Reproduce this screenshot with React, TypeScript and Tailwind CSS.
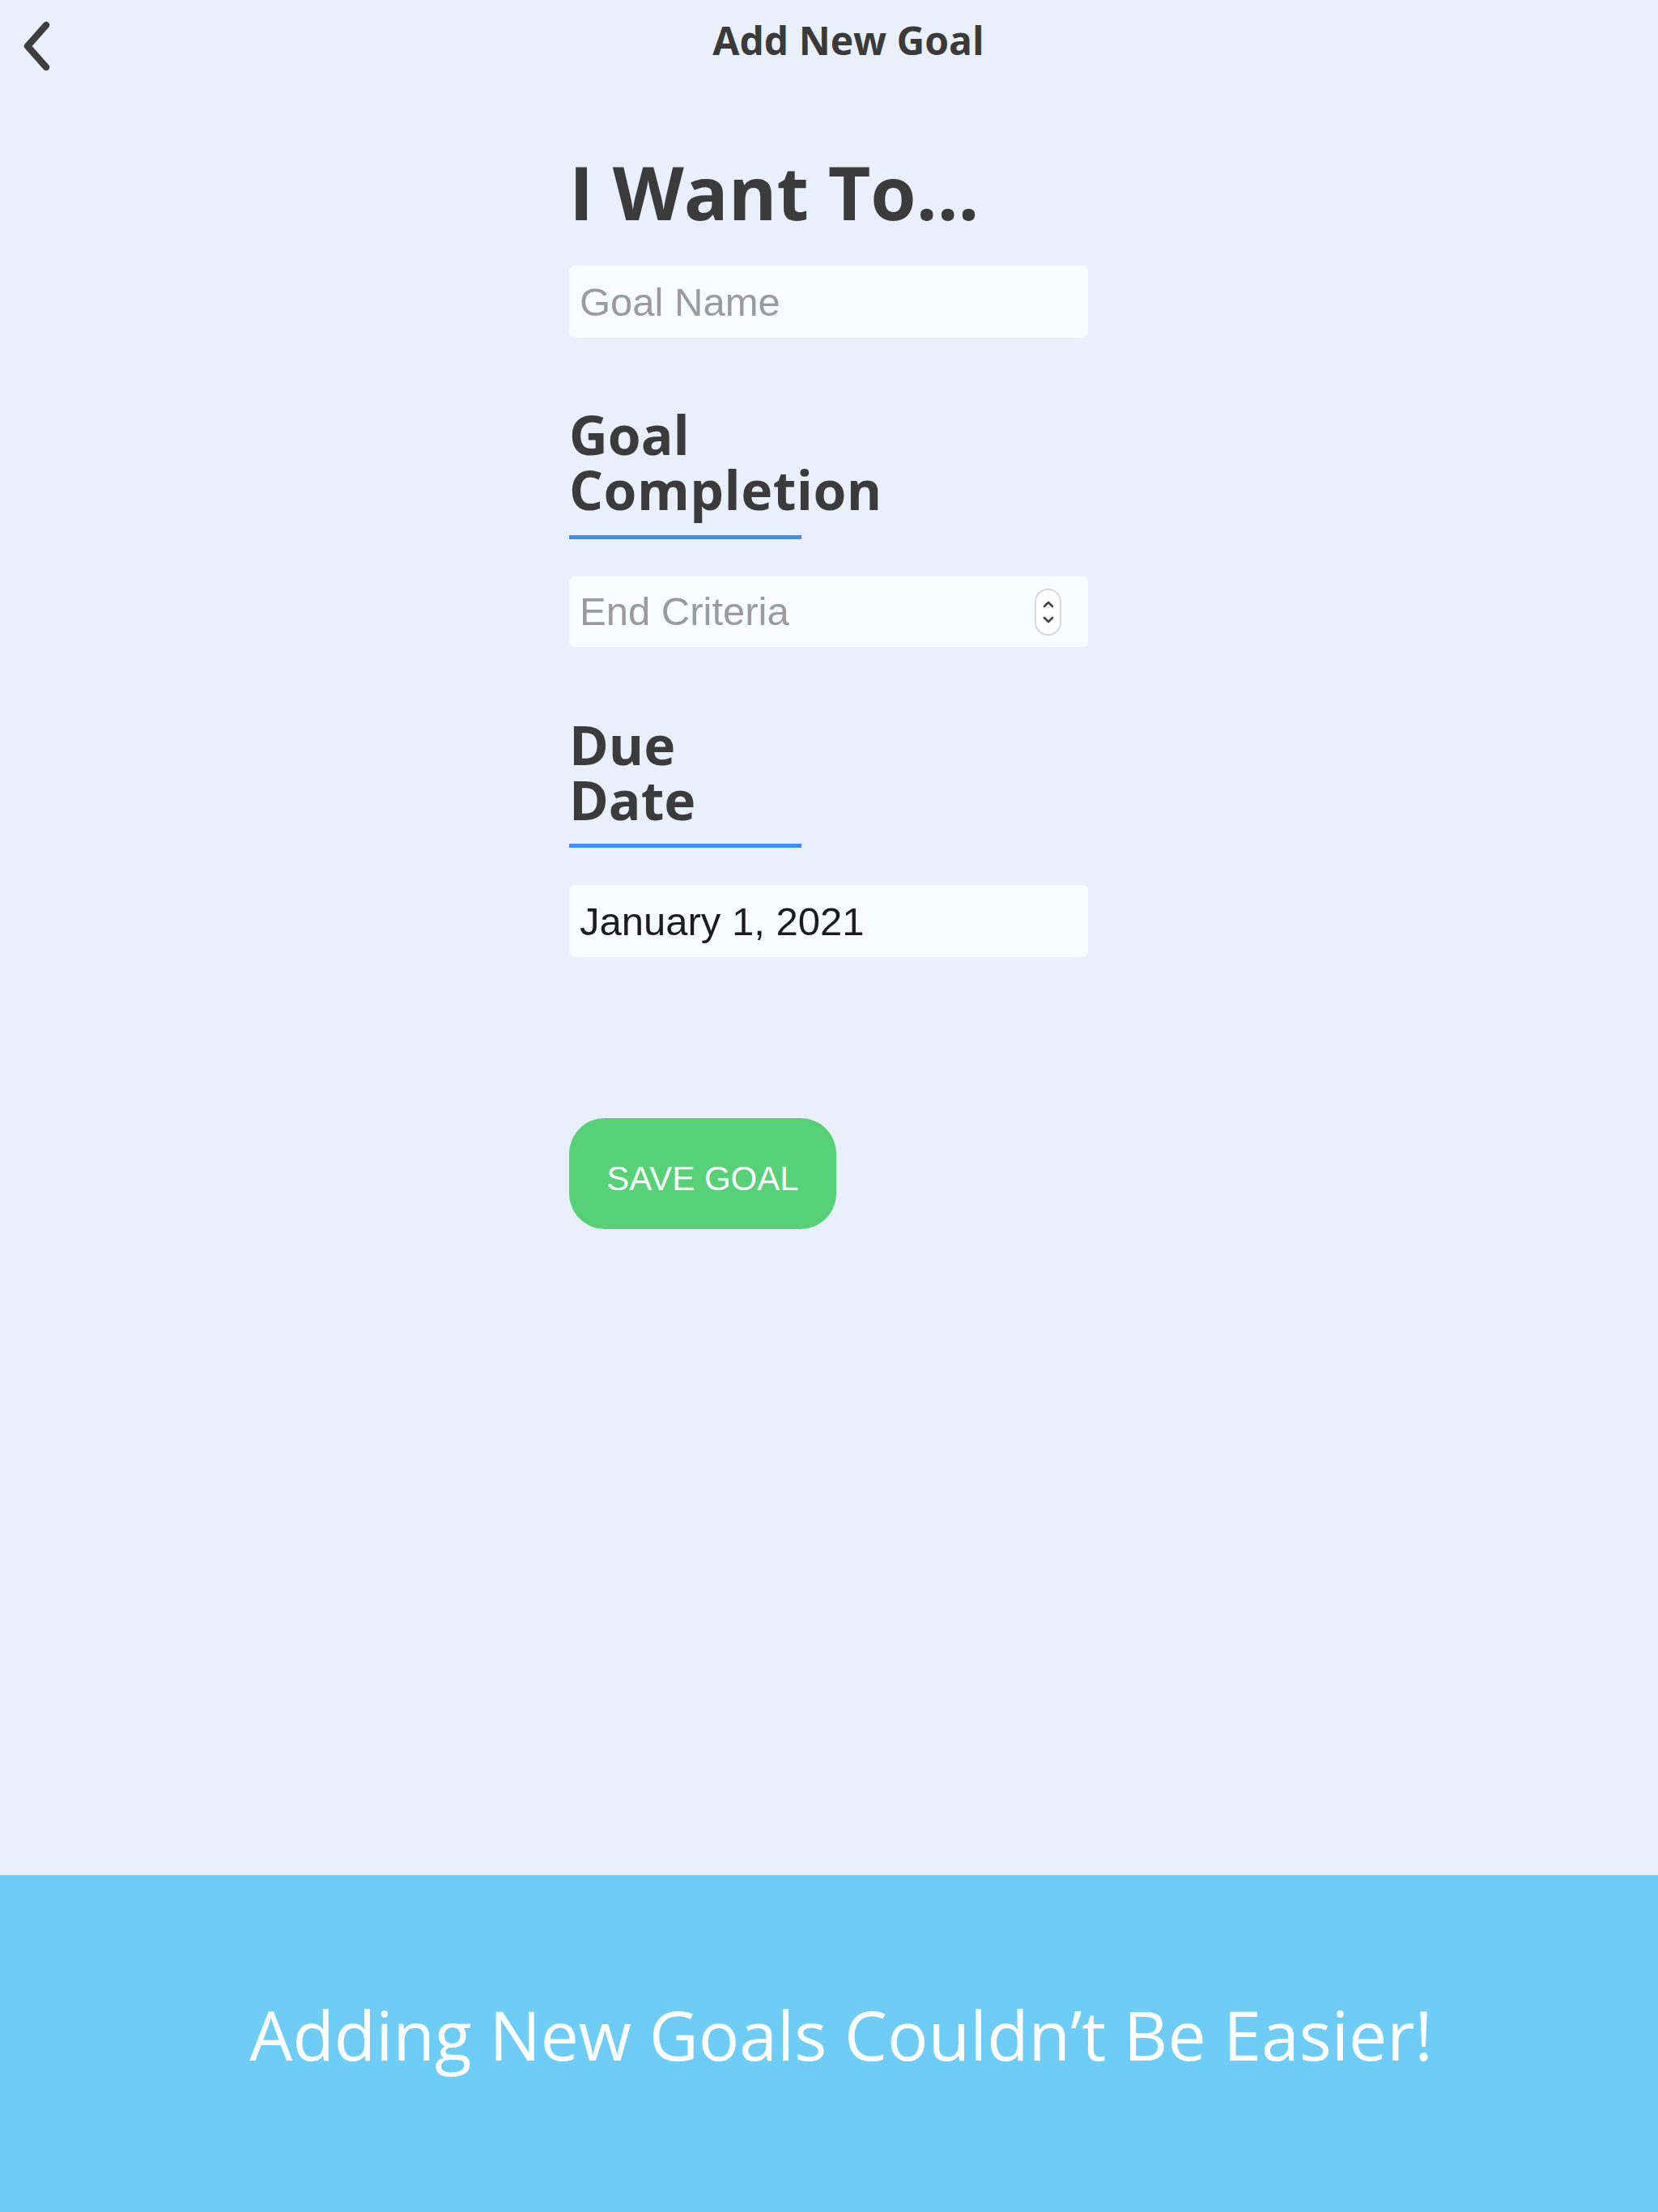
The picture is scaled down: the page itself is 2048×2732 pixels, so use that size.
import React from "react";

const headingFont = { fontFamily: '"Open Sans", "Noto Sans", sans-serif' };

function BackChevron() {
  return (
    <svg width="42" height="62" viewBox="0 0 42 62" fill="none">
      <path
        d="M33 5 L10 31 L33 57"
        stroke="#3d3d3d"
        strokeWidth="8.5"
        strokeLinecap="round"
        strokeLinejoin="round"
      />
    </svg>
  );
}

function Stepper() {
  return (
    <div className="flex h-[58px] w-[33px] flex-col items-center justify-center gap-[10px] rounded-full border-2 border-[#d6d8dc] bg-white">
      <svg width="14" height="9" viewBox="0 0 14 9" fill="none">
        <path d="M2 7 L7 2 L12 7" stroke="#444" strokeWidth="2.6" strokeLinecap="round" strokeLinejoin="round" />
      </svg>
      <svg width="14" height="9" viewBox="0 0 14 9" fill="none">
        <path d="M2 2 L7 7 L12 2" stroke="#444" strokeWidth="2.6" strokeLinecap="round" strokeLinejoin="round" />
      </svg>
    </div>
  );
}

export default function App() {
  return (
    <div className="flex h-[2732px] w-[2048px] flex-col bg-[#e9f0fb]">
      <main className="flex-1">
        <header className="flex h-[100px] items-start">
          <button className="ml-[24px] mt-[26px] shrink-0">
            <BackChevron />
          </button>
          <h1
            className="flex-1 pt-[26px] pr-[18px] text-center text-[48px] leading-none font-bold text-[#3a3a3a]"
            style={headingFont}
          >
            Add New Goal
          </h1>
        </header>

        <div className="flex justify-center">
          <div className="w-[642px]">
            <h2
              className="mt-[92px] text-[91px] leading-none font-bold text-[#3b3b3b]"
              style={headingFont}
            >
              I Want To...
            </h2>
            <input
              placeholder="Goal Name"
              className="mt-[45px] block h-[89px] w-[641px] rounded-[7px] bg-[#f8fbff] px-[13px] font-['Liberation_Sans',Arial,sans-serif] text-[49px] text-[#1c1c1c] outline-none placeholder:text-[#9b9b9b]"
            />

            <div className="mt-[85px] w-[287px] border-b-[5px] border-[#3d8ff0] pb-[23px]">
              <h2 className="font-['Open_Sans',sans-serif] text-[66px] leading-[68px] font-bold whitespace-nowrap text-[#3b3b3b]">
                Goal
                <br />
                <span className="tracking-[0.5px]">Completion</span>
              </h2>
            </div>
            <div className="mt-[46px] flex h-[87px] w-[641px] items-center justify-between rounded-[7px] bg-[#f8fbff] pl-[13px] pr-[33px]">
              <span className="font-['Liberation_Sans',Arial,sans-serif] text-[49px] text-[#9b9b9b]">
                End Criteria
              </span>
              <Stepper />
            </div>

            <div className="mt-[86px] w-[287px] border-b-[5px] border-[#3d8ff0] pb-[21px]">
              <h2 className="font-['Open_Sans',sans-serif] text-[66px] leading-[68px] font-bold text-[#3b3b3b]">
                Due
                <br />
                Date
              </h2>
            </div>
            <input
              readOnly
              value="January 1, 2021"
              className="mt-[46px] block h-[89px] w-[641px] rounded-[7px] bg-[#f8fbff] px-[13px] font-['Liberation_Sans',Arial,sans-serif] text-[49px] text-[#1c1c1c] outline-none"
            />

            <button className="mt-[199px] flex h-[137px] w-[330px] items-center justify-center rounded-[44px] bg-[#56d178] pt-[12px] font-['Liberation_Sans',Arial,sans-serif] text-[42px] text-white">
              SAVE GOAL
            </button>
          </div>
        </div>
      </main>

      <footer className="flex h-[416px] items-center justify-center bg-[#6ecdf7] pb-[22px] pl-[30px]">
        <p
          className="text-[84px] leading-none font-normal text-white"
          style={headingFont}
        >
          Adding New Goals Couldn’t Be Easier!
        </p>
      </footer>
    </div>
  );
}
